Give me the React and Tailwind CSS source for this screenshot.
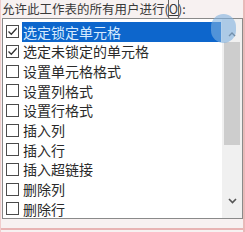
import React from 'react'

const items = [
  { label: '选定锁定单元格', checked: true, selected: true },
  { label: '选定未锁定的单元格', checked: true },
  { label: '设置单元格格式' },
  { label: '设置列格式' },
  { label: '设置行格式' },
  { label: '插入列' },
  { label: '插入行' },
  { label: '插入超链接' },
  { label: '删除列' },
  { label: '删除行' },
]

const CheckBox = ({ checked }) => (
  <div className="w-[13px] h-[13px] border border-[#4a4a4a] bg-white flex items-center justify-center shrink-0">
    {checked && (
      <svg width="11" height="11" viewBox="0 0 11 11">
        <path d="M1.5 5.5 L4.3 8.3 L9.7 2.2" fill="none" stroke="#333" strokeWidth="1.3" />
      </svg>
    )}
  </div>
)

export default function App() {
  return (
    <div
      className="relative w-[245px] h-[232px] overflow-hidden bg-[#f7f1f1] text-[#2a2a2a]"
      style={{ fontFamily: '"Noto Sans CJK SC", "Noto Sans", sans-serif' }}
    >
      {/* label */}
      <div className="h-[18px] pl-[2px] text-[12.5px] leading-[17px] text-[#3a3a3a] whitespace-nowrap">
        允许此工作表的所有用户进行(<span className="underline outline outline-1 outline-[#666] rounded-[1px]">O</span>):
      </div>

      {/* list box */}
      <div className="mx-[2px] h-[201px] border border-[#8a8a8a] bg-white flex">
        <div className="flex-1 pt-[3px] pr-[1px]">
          {items.map((it) => (
            <div key={it.label} className="h-[19.67px] flex items-center pl-[3px]">
              <CheckBox checked={it.checked} />
              <div
                className={
                  'ml-[3px] h-full flex items-center pl-[1px] text-[14px] leading-none whitespace-nowrap ' +
                  (it.selected ? 'flex-1 bg-[#0d66cc] text-[#d6ebff]' : '')
                }
              >
                {it.label}
              </div>
            </div>
          ))}
        </div>
        <div className="w-[20px] bg-[#f0f0f0] flex flex-col items-center">
          <div className="h-[22px] flex items-end justify-center pb-[4px]">
            <svg width="8" height="5" viewBox="0 0 8 5">
              <path d="M1 4 L4 1 L7 4" fill="none" stroke="#606060" strokeWidth="1.4" />
            </svg>
          </div>
          <div className="mt-[1px] w-[16px] h-[103px] bg-[#cdcdcd]" />
          <div className="flex-1" />
          <div className="h-[24px] flex items-start justify-center pt-[4px]">
            <svg width="9" height="6" viewBox="0 0 9 6">
              <path d="M1 1 L4.5 4.5 L8 1" fill="none" stroke="#555" strokeWidth="1.6" />
            </svg>
          </div>
        </div>
      </div>

      {/* bottom pink area */}
      <div className="mt-[9px] h-[2px] bg-[#e8b4b4]" />

      {/* touch blob overlay */}
      <div className="absolute left-[211px] top-[14px] w-[25px] h-[29px] rounded-full bg-[#7fb0e0] opacity-60" />

      {/* pink edges */}
      <div className="absolute right-0 top-0 w-[2px] h-full bg-[#eab8b8]" />
      <div className="absolute left-0 top-0 w-[1px] h-full bg-[#f0cccc]" />
    </div>
  )
}
